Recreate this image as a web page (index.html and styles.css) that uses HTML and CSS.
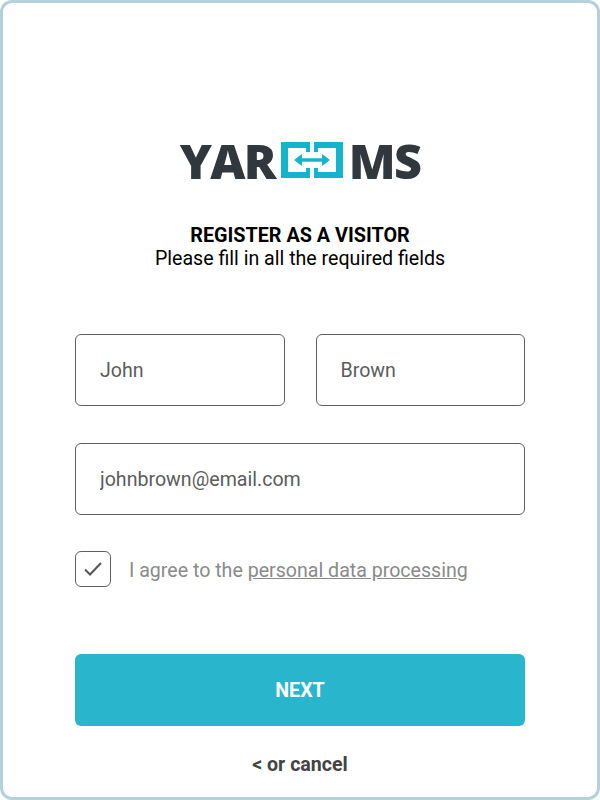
FILE: index.html
```html
<!DOCTYPE html>
<html lang="en">
<head>
    <meta charset="UTF-8">
    <meta name="viewport" content="width=device-width, initial-scale=1.0">
    <title>YAROOMS - Register as a visitor</title>
    <link rel="stylesheet" href="styles.css">
</head>
<body>

    <main class="Frame">
        <div class="Logo">
            <span class="LogoText">YAR</span>
            <svg class="LogoIcon" width="62" height="36" viewBox="0 0 62 36">
                <path fill="#14b4cf" d="M0 0H29V10H25V6H7V30H25V26H29V36H0Z"/>
                <path fill="#14b4cf" d="M33 0H62V36H33V26H37V30H55V6H37V10H33Z"/>
                <path fill="#14b4cf" d="M13 18L21 12V16.2H41V12L49 18L41 24V19.8H21V24Z"/>
            </svg>
            <span class="LogoText">MS</span>
        </div>

        <div class="Intro">
            <h1 class="Title">REGISTER AS A VISITOR</h1>
            <p class="Subtitle">Please fill in all the required fields</p>
        </div>

        <form class="Form">
            <div class="Row">
                <input class="Field" type="text" value="John">
                <input class="Field" type="text" value="Brown">
            </div>
            <input class="Field" type="text" value="johnbrown@email.com">

            <div class="Agree">
                <span class="Check">
                    <svg width="18" height="14" viewBox="0 0 18 14">
                        <path fill="none" stroke="#555" stroke-width="2" d="M1 7.5L6 12.5L17 1"/>
                    </svg>
                </span>
                <span class="AgreeText">I agree to the <a class="Link" href="#">personal data processing</a></span>
            </div>

            <button class="Next" type="button">NEXT</button>
        </form>

        <a class="Cancel" href="#">&lt; or cancel</a>
    </main>

</body>
</html>
```

FILE: styles.css
```css
body {
    margin: 0;
    font-family: Roboto, sans-serif;
    background: #fff;
}

.Frame {
    box-sizing: border-box;
    width: 600px;
    height: 800px;
    padding: 135px 72px 0;
    border: 3px solid #b4d0da;
    border-radius: 12px;
    display: flex;
    flex-direction: column;
    align-items: stretch;
}

.Logo {
    display: flex;
    justify-content: center;
    align-items: center;
    gap: 6px;
    height: 44px;
}

.LogoText {
    font-family: "Open Sans", sans-serif;
    font-size: 48.5px;
    font-weight: 800;
    letter-spacing: -1.7px;
    line-height: 44px;
    color: #30373d;
}

.LogoIcon {
    display: block;
}

.Intro {
    margin-top: 42px;
    text-align: center;
    color: #000;
}

.Title {
    margin: 0;
    font-size: 19.8px;
    font-weight: 700;
    line-height: 23px;
}

.Subtitle {
    margin: 0;
    font-size: 19.6px;
    line-height: 24px;
}

.Form {
    margin-top: 63px;
    display: flex;
    flex-direction: column;
}

.Row {
    display: flex;
    gap: 31px;
    margin-bottom: 37px;
}

.Field {
    box-sizing: border-box;
    width: 100%;
    min-width: 0;
    height: 72px;
    padding: 0 24px;
    border: 1px solid #5f5f5f;
    border-radius: 6px;
    font-family: Roboto, sans-serif;
    font-size: 19.6px;
    color: #5c5c5c;
    background: #fff;
}

.Agree {
    display: flex;
    align-items: center;
    gap: 18px;
    margin-top: 36px;
    font-size: 19.6px;
    color: #8a8a8a;
}

.AgreeText {
    padding-top: 2px;
}

.Check {
    box-sizing: border-box;
    width: 36px;
    height: 36px;
    border: 1px solid #5f5f5f;
    border-radius: 6px;
    display: flex;
    justify-content: center;
    align-items: center;
}

.Link {
    color: #8a8a8a;
    text-decoration: underline;
}

.Next {
    height: 72px;
    margin-top: 67px;
    border: 0;
    border-radius: 6px;
    background: #29b5cc;
    color: #fff;
    font-family: Roboto, sans-serif;
    font-size: 19.6px;
    font-weight: 700;
}

.Cancel {
    margin-top: 27px;
    text-align: center;
    font-size: 19.6px;
    font-weight: 700;
    line-height: 24px;
    color: #444;
    text-decoration: none;
}
```
